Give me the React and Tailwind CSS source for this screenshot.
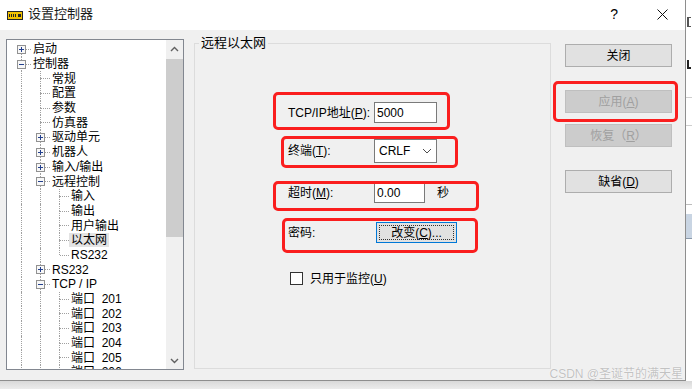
import React from 'react';

const treeRows = [
  { text: '启动', g: '', c: 'F', box: '+' },
  { text: '控制器', g: '', c: 'T', box: '-' },
  { text: '常规', g: '|', c: 'T' },
  { text: '配置', g: '|', c: 'T' },
  { text: '参数', g: '|', c: 'T' },
  { text: '仿真器', g: '|', c: 'T' },
  { text: '驱动单元', g: '|', c: 'T', box: '+' },
  { text: '机器人', g: '|', c: 'T', box: '+' },
  { text: '输入/输出', g: '|', c: 'T', box: '+' },
  { text: '远程控制', g: '|', c: 'T', box: '-' },
  { text: '输入', g: '||', c: 'T' },
  { text: '输出', g: '||', c: 'T' },
  { text: '用户输出', g: '||', c: 'T' },
  { text: '以太网', g: '||', c: 'T', sel: true },
  { text: 'RS232', g: '||', c: 'L' },
  { text: 'RS232', g: '|', c: 'T', box: '+' },
  { text: 'TCP / IP', g: '|', c: 'T', box: '-' },
  { text: '端口\u00a0\u00a0201', g: '||', c: 'T' },
  { text: '端口\u00a0\u00a0202', g: '||', c: 'T' },
  { text: '端口\u00a0\u00a0203', g: '||', c: 'T' },
  { text: '端口\u00a0\u00a0204', g: '||', c: 'T' },
  { text: '端口\u00a0\u00a0205', g: '||', c: 'T' },
  { text: '端口\u00a0\u00a0206', g: '||', c: 'T' },
];

function Guide({ type, box }) {
  const line = 'absolute left-[9px] border-l border-dotted border-[#a0a0a0]';
  return (
    <span className="relative w-[19px] shrink-0">
      {type === '|' && <span className={line + ' top-0 bottom-0'} />}
      {(type === 'T' || type === 'L') && <span className={line + ' top-0 h-[7px]'} />}
      {(type === 'T' || type === 'F') && <span className={line + ' top-[7px] bottom-0'} />}
      {type !== '|' && (
        <span className="absolute left-[10px] right-0 top-[7px] border-t border-dotted border-[#a0a0a0]" />
      )}
      {box && (
        <span className="absolute left-[5px] top-[3px] w-[9px] h-[9px] border border-[#919191] bg-[#f7f7f7]">
          <svg width="7" height="7" viewBox="0 0 7 7" className="block">
            <path d="M1 3.5h5" stroke="#23408e" strokeWidth="1" />
            {box === '+' && <path d="M3.5 1v5" stroke="#23408e" strokeWidth="1" />}
          </svg>
        </span>
      )}
    </span>
  );
}

function TreeRow({ row }) {
  return (
    <div className="flex h-[14.7px] shrink-0">
      {row.g.split('').map((t, i) => <Guide key={i} type={t} />)}
      <Guide type={row.c} box={row.box} />
      <span
        className={
          'self-center px-[2px] text-[12px] leading-[14px] whitespace-nowrap text-black ' +
          (row.sel ? 'bg-[#e3e3e3]' : '')
        }
      >
        {row.text}
      </span>
    </div>
  );
}

function Chevron({ up }) {
  return (
    <svg width="9" height="6" viewBox="0 0 9 6">
      <path
        d={up ? 'M1 5 L4.5 1.5 L8 5' : 'M1 1 L4.5 4.5 L8 1'}
        fill="none"
        stroke="#606060"
        strokeWidth="1.4"
      />
    </svg>
  );
}

function Tree() {
  return (
    <div className="flex w-[178px] h-[331px] shrink-0 border border-[#828790] bg-white overflow-hidden">
      <div className="flex-1 flex flex-col pl-[5px] pt-[2px] overflow-hidden">
        {treeRows.map((r, i) => <TreeRow key={i} row={r} />)}
      </div>
      <div className="w-[17px] flex flex-col bg-[#f0f0f0]">
        <div className="h-[17px] flex items-center justify-center"><Chevron up /></div>
        <div className="mt-[2px] h-[178px] bg-[#cdcdcd]" />
        <div className="flex-1" />
        <div className="h-[17px] flex items-center justify-center"><Chevron /></div>
      </div>
    </div>
  );
}

function U({ children }) {
  return <span className="underline underline-offset-[1px]">{children}</span>;
}

const redBox = 'absolute border-[3px] border-[#fa1e1e] rounded-[5px] pointer-events-none';

function Group() {
  return (
    <div className="relative ml-[10px] mt-[4px] w-[357px] h-[326px] shrink-0 border border-[#dcdcdc]">
      <span className="absolute left-[4px] -top-[9px] px-[2px] bg-[#f0f0f0] text-[13px] leading-[15px] text-black">
        远程以太网
      </span>

      <div className="flex flex-col pl-[93px] pt-[58px] text-[12px] text-black">
        <div className="flex items-center h-[21px]">
          <span className="w-[86px] shrink-0 whitespace-nowrap">TCP/IP地址(<U>P</U>):</span>
          <div className="w-[63px] h-[21px] border border-[#7a7a7a] bg-white pl-[2px] flex items-center">5000</div>
        </div>

        <div className="flex items-center h-[24px] mt-[16px]">
          <span className="w-[86px] shrink-0 whitespace-nowrap">终端(<U>T</U>):</span>
          <div className="w-[63px] h-[24px] border border-[#7a7a7a] bg-white pl-[4px] pr-[4px] flex items-center justify-between">
            <span>CRLF</span>
            <svg width="10" height="6" viewBox="0 0 10 6">
              <path d="M1 1 L5 5 L9 1" fill="none" stroke="#4d4d4d" strokeWidth="1" />
            </svg>
          </div>
        </div>

        <div className="flex items-center h-[21px] mt-[19px]">
          <span className="w-[86px] shrink-0 whitespace-nowrap">超时(<U>M</U>):</span>
          <div className="w-[51px] h-[21px] border border-[#7a7a7a] bg-white pl-[2px] flex items-center">0.00</div>
          <span className="ml-[12px]">秒</span>
        </div>

        <div className="flex items-center h-[21px] mt-[19px]">
          <span className="w-[88px] shrink-0">密码:</span>
          <div className="w-[81px] h-[21px] border border-[#0078d7] bg-[#e1e1e1] p-[2px]">
            <div className="h-full border border-dotted border-[#333] flex items-center justify-center whitespace-nowrap">
              改变(<U>C</U>)...
            </div>
          </div>
        </div>

        <div className="flex items-center h-[13px] mt-[29px]">
          <span className="ml-[2px] w-[13px] h-[13px] border border-[#333] bg-white" />
          <span className="ml-[7px] whitespace-nowrap">只用于监控(<U>U</U>)</span>
        </div>
      </div>

      <div className={redBox + ' left-[78px] top-[48px] w-[177px] h-[38px]'} />
      <div className={redBox + ' left-[86px] top-[92px] w-[177px] h-[32px]'} />
      <div className={redBox + ' left-[78px] top-[137px] w-[206px] h-[30px]'} />
      <div className={redBox + ' left-[87px] top-[174px] w-[196px] h-[35px]'} />
    </div>
  );
}

function Buttons() {
  const btn = 'h-[23px] flex items-center justify-center border text-[12px]';
  return (
    <div className="relative ml-[14px] mt-[5px] w-[107px] flex flex-col shrink-0">
      <div className={btn + ' border-[#adadad] bg-[#e1e1e1] text-black'}>关闭</div>
      <div className={btn + ' mt-[23px] border-[#bfbfbf] bg-[#cccccc] text-[#a0a0a0]'}>应用(<U>A</U>)</div>
      <div className={btn + ' mt-[11px] border-[#bfbfbf] bg-[#cccccc] text-[#a0a0a0]'}>恢复（<U>R</U>）</div>
      <div className={btn + ' mt-[23px] border-[#adadad] bg-[#e1e1e1] text-black'}>缺省(<U>D</U>)</div>
      <div className={redBox + ' -left-[12px] top-[37px] w-[125px] h-[41px]'} />
    </div>
  );
}

export default function App() {
  return (
    <div className="relative w-[692px] h-[389px] overflow-hidden bg-[#e9e9e9] font-['Liberation_Sans','Noto_Sans_CJK_SC',sans-serif]">
      <div className="flex">
        <div className="w-[686px] h-[381px] flex flex-col border-r border-b border-[#8e8e8e]">
          {/* title bar */}
          <div className="h-[30px] shrink-0 bg-white flex items-center pl-[7px] pr-[17px]">
            <svg width="16" height="9" viewBox="0 0 16 9">
              <rect x="0" y="0" width="16" height="9" fill="#262626" />
              <rect x="1" y="1" width="14" height="7" fill="#f3c300" />
              <rect x="2" y="3" width="1" height="3" fill="#262626" />
              <rect x="4" y="3" width="1" height="3" fill="#262626" />
              <rect x="6" y="3" width="1" height="3" fill="#262626" />
              <rect x="8" y="3" width="1" height="3" fill="#262626" />
              <rect x="11" y="3" width="3" height="3" fill="#262626" />
            </svg>
            <span className="ml-[5px] -mt-[2px] text-[13px] text-[#1a1a1a]">设置控制器</span>
            <div className="flex-1" />
            <span className="-mt-[2px] text-[14px] text-black">?</span>
            <svg width="11" height="11" viewBox="0 0 11 11" className="ml-[39px] -mt-[1px]">
              <path d="M0.5 0.5 L10.5 10.5 M10.5 0.5 L0.5 10.5" stroke="#111" strokeWidth="1" />
            </svg>
          </div>

          {/* client */}
          <div className="flex-1 bg-[#f0f0f0] flex items-start pl-[6px] pt-[9px]">
            <Tree />
            <Group />
            <Buttons />
          </div>
        </div>

        {/* strip of the window behind */}
        <div className="w-[6px] h-[381px] bg-white flex flex-col">
          <div className="mt-[17px] ml-[1px] w-[4px] h-[10px] border-l-2 border-y border-[#555]" />
          <div className="mt-[33px] ml-[1px] w-[4px] h-[9px] border-l-2 border-b-2 border-[#222]" />
          <div className="mt-[28px] h-px bg-[#cfcfcf]" />
          <div className="mt-[27px] h-px bg-[#cfcfcf]" />
          <div className="mt-[78px] h-px bg-[#bdbdbd]" />
          <div className="mt-[9px] h-[25px] bg-[#c9d5e3] border-b border-[#8a99aa]" />
        </div>
      </div>
      <div className="h-[8px] bg-gradient-to-b from-[#d9d9d9] to-[#ececec]" />

      <span className="absolute right-[9px] top-[367px] text-[12px] leading-[14px] text-[#c2c2c2] [text-shadow:0_0_1px_#fff,0_0_1px_#fff]">
        CSDN @圣诞节的满天星
      </span>
    </div>
  );
}
